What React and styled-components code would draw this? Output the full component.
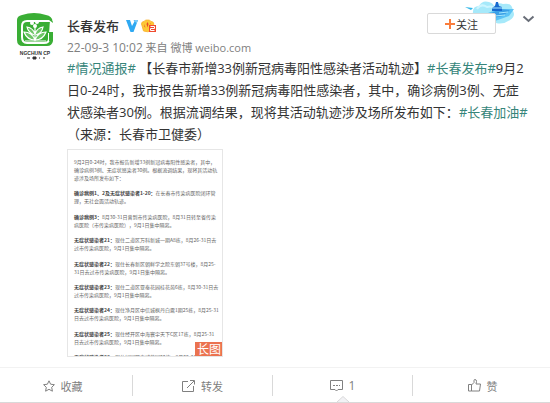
import React from 'react';

//styles
import styled, { createGlobalStyle } from 'styled-components'

const GlobalStyle = createGlobalStyle`
  * {
    box-sizing: border-box;
  }

  body {
    margin: 0;
    background: #fff;
    color: #333;
    font-family: "Open Sans", "Noto Sans CJK SC", sans-serif;
    font-size: 13px;
    text-spacing-trim: space-all;
  }
`

let Card = styled.article`
  overflow: hidden;
  border-bottom: 1px solid #d9d9d9;
`

let Main = styled.div`
  display: grid;
  grid-template-columns: 40px 1fr;
  column-gap: 12px;
  padding: 12px 15px 10px;
`

let AvatarLink = styled.a`
  display: block;

  svg {
    display: block;
  }
`

let Header = styled.header`
  display: flex;
  justify-content: space-between;
  padding-top: 5px;
`

let NameRow = styled.div`
  display: flex;
  align-items: center;
  gap: 3px;
  height: 18px;
`

let Name = styled.a`
  margin-right: 4px;
  color: #333;
  font-weight: 500;
  line-height: 18px;
  text-decoration: none;
`

let Meta = styled.p`
  margin: 4px 0 0;
  color: #808080;
  font-size: 11px;
  line-height: 18px;

  a {
    color: inherit;
    text-decoration: none;
  }

  time {
    font-size: 12px;
  }
`

let Actions = styled.div`
  position: relative;
  display: flex;
  align-items: flex-start;
  gap: 26px;
  margin-top: -4px;
`

let Cover = styled.svg`
  position: absolute;
  top: -13px;
  left: 37px;
`

let FollowButton = styled.button`
  position: relative;
  display: flex;
  align-items: center;
  justify-content: center;
  gap: 1px;
  width: 69px;
  height: 21px;
  padding: 0;
  border: 1px solid #d9d9d9;
  border-radius: 2px;
  background: #fff;
  color: #333;
  font: inherit;
  font-size: 11px;
  cursor: pointer;
`

let MoreButton = styled.button`
  display: flex;
  align-items: center;
  height: 12px;
  padding: 0;
  border: 0;
  background: none;
  cursor: pointer;
`

let Content = styled.p`
  margin: 0;
  line-height: 22px;
`

let Topic = styled.a`
  color: #36857a;
  text-decoration: none;
`

let Picture = styled.figure`
  position: relative;
  width: 156px;
  height: 208px;
  margin: 4px 0 0;
  padding: 8px 3px 0 6px;
  overflow: hidden;
  border: 1px solid #e6e6e6;
`

let Notice = styled.div`
  display: flex;
  flex-direction: column;
  justify-content: space-between;
  height: 203px;
  color: #666;
  font-family: "Noto Sans CJK SC", sans-serif;
  font-size: 5px;
  line-height: 8px;

  p {
    margin: 0;
  }

  b {
    color: #444;
  }
`

let LongTag = styled.figcaption`
  position: absolute;
  right: -1px;
  bottom: -1px;
  width: 28px;
  background: #eb7350;
  color: #fff;
  font-size: 12px;
  line-height: 15px;
  text-align: center;
`

let Footer = styled.footer`
  display: grid;
  grid-template-columns: repeat(4, 1fr);
  margin: 0 -3px 0 -7px;
  padding: 7px 0 6px;
  border-top: 1px solid #f2f2f2;
`

let FooterButton = styled.button`
  position: relative;
  display: flex;
  align-items: center;
  justify-content: center;
  gap: 6px;
  height: 21px;
  padding: 0;
  border: 0;
  border-right: 1px solid #d9d9d9;
  background: none;
  color: #808080;
  font: inherit;
  font-size: ${props => props.$count ? '12px' : '11px'};
  cursor: pointer;
`

let Arrow = styled.svg`
  position: absolute;
  bottom: -6px;
  left: 64px;
`

const Avatar = () => (
  <svg width="40" height="50" viewBox="0 0 40 50">
    <path d="M7 3Q19-1 31 3Q37 4 38 10V29Q37 34 32 34H8Q2 34 2 28V8Q2 4 7 3Z" fill="#3aae35" />
    <path d="M38 9H12Q7 9 7 14V25Q7 31 12 31H29Q34 31 34 27V21" fill="none" stroke="#fff" strokeWidth="2" />
    <path d="M35 8H40V20L34 22Z" fill="#fff" />
    <path d="M33 5Q38 7 38 11L34 8Z" fill="#3aae35" />
    <path d="M34 20H38V29H34Z" fill="#3aae35" />
    <path d="M20 29V14M20 28Q12 28 9 20Q17 20 20 28Q23 20 31 20Q28 28 20 28M19 23Q13 20 12 15Q18 16 20 22Q22 16 28 15Q27 21 21 23" fill="#6cc564" stroke="#fff" strokeWidth="1.2" />
    <circle cx="17" cy="11" r="2" fill="#fff" />
    <circle cx="22" cy="10" r="2" fill="#fff" />
    <circle cx="20" cy="14" r="2" fill="#fff" />
    <path d="M10 29H31" stroke="#fff" strokeWidth="1" />
    <text x="20" y="43" textAnchor="middle" fontSize="5" fontWeight="700" fill="#333" fontFamily="Liberation Sans, sans-serif">NGCHUN CP</text>
    <path d="M12 46h3M18 45h3v2h-3zM24 46h1M28 46h2" fill="#333" stroke="#333" strokeWidth="1" />
  </svg>
)

const Verified = () => (
  <svg width="12" height="12" viewBox="0 0 12 12">
    <path d="M0 0H4L6 6L8.500 1.500L7.500 0H12L7.500 12H4.500Z" fill="#2fa9f2" />
    <path d="M8 0H12L10.500 3.500Z" fill="#7dccfa" />
  </svg>
)

const Crown = () => (
  <svg width="16" height="14" viewBox="0 0 16 14">
    <path d="M.5 5Q.5 2.500 3 2.500Q4 .5 6.500 1Q9 .5 10 2.500Q12.800 2.500 12.800 5L11 12Q6.500 13.500 2.500 12Z" fill="#fdc836" stroke="#f9ae2b" strokeWidth=".8" />
    <path d="M6.500 3L7.500 5L6.500 8.500L5.500 5ZM3 5L4.500 8.500L3.500 8ZM10 4L9 6L9.500 4Z" fill="#e94b25" />
    <rect x="8" y="6" width="7" height="7" fill="#ef4a2f" />
    <path d="M9.500 7.500H13.500V9.500H9.500V11.500H13.500" fill="none" stroke="#fff" strokeWidth="1" />
  </svg>
)

const CoverArt = () => (
  <Cover width="54" height="26" viewBox="0 0 54 26">
    <path d="M1 7L9 8L7 10Z" fill="#35b8e8" />
    <path d="M9 14Q8 6 15 6Q18 0 25 2Q29 3 30 6Q34 2 39 4Q48 2 49 11Q52 16 46 20Q39 25 32 23H8Z" fill="#a6e9fa" />
    <path d="M13 9Q17 3 23 7Q29 5 31 10" fill="none" stroke="#cdf5ff" strokeWidth="2" />
    <path d="M19 15L34 9L50 9L45 16L31 21Z" fill="#5cc3f5" />
    <path d="M25 14L36 9L46 10L39 16L29 18Z" fill="#3a9fe6" />
    <path d="M32 2H34L35 6L38 7V11H28V8L31 6Z" fill="#1769cf" />
    <path d="M28 8H38M35 13L44 12M31 16L41 15" stroke="#a6e9ff" strokeWidth="1" />
  </Cover>
)

const StarIcon = () => (
  <svg width="12" height="12" viewBox="0 0 12 12" fill="none" stroke="#808080">
    <path d="M6 .8L7.600 4.200L11.400 4.700L8.700 7.300L9.400 11.200L6 9.300L2.600 11.200L3.300 7.300L.6 4.700L4.400 4.200Z" />
  </svg>
)

const ShareIcon = () => (
  <svg width="13" height="12" viewBox="0 0 13 12" fill="none" stroke="#808080">
    <path d="M6 1.500H.5V11.500H11.500V6M8 .5H12.500V4.500M12 1L5 8" />
  </svg>
)

const CommentIcon = () => (
  <svg width="13" height="12" viewBox="0 0 13 12" fill="none" stroke="#808080">
    <path d="M.5 .5H12.500V9.500H8L6.500 11L5 9.500H.5Z" />
    <path d="M3 5.500H10" strokeDasharray="2 1" />
  </svg>
)

const LikeIcon = () => (
  <svg width="13" height="13" viewBox="0 0 13 13" fill="none" stroke="#808080">
    <path d="M.5 5.500H3.500V12H.5ZM3.500 6L6 3.500V1.500Q6 .5 7 .5Q8.500 .5 8.500 2.500L8 5H12.500L11.500 12H3.500" />
  </svg>
)

//paragraphs of the long notice picture
const notice = [
  { text: '9月2日0-24时\uff0c我市报告新增33例新冠病毒阳性感染者\uff0c其中\uff0c确诊病例3例、无症状感染者30例。根据流调结果\uff0c现将其活动轨迹涉及场所发布如下\uff1a' },
  { title: '确诊病例1、2及无症状感染者1-20\uff1a', text: '在长春市传染病医院闭环管理\uff0c无社会面活动轨迹。' },
  { title: '确诊病例3\uff1a', text: '8月30-31日曾到市传染病医院\uff0c8月31日转至省传染病医院\uff08市传染病医院\uff09\uff0c9月1日集中隔离。' },
  { title: '无症状感染者21\uff1a', text: '现住二道区万科新城一期A8栋\uff0c8月26-31日去过市传染病医院\uff0c9月1日集中隔离。' },
  { title: '无症状感染者22\uff1a', text: '现住长春新区朝鲜学之院东朝37号楼\uff0c8月25-31日去过市传染病医院\uff0c9月1日集中隔离。' },
  { title: '无症状感染者23\uff1a', text: '现住二道区亚泰花园桂花苑6栋\uff0c8月30-31日去过市传染病医院\uff0c9月1日集中隔离。' },
  { title: '无症状感染者24\uff1a', text: '现住净月区中信城枫丹白露1期25栋\uff0c8月25-31日去过市传染病医院\uff0c9月1日集中隔离。' },
  { title: '无症状感染者25\uff1a', text: '现住经开区中海寰宇天下C区17栋\uff0c8月25-31日去过市传染病医院\uff0c9月1日集中隔离。' },
  { title: '无症状感染者26\uff1a', text: '现住绿园区春城花园22栋\uff0c8月25-31日' },
]

const Post = () => {
  return (
    <Card>
      <Main>
        <AvatarLink href="#" aria-label="长春发布">
          <Avatar />
        </AvatarLink>
        <div>
          <Header>
            <div>
              <NameRow>
                <Name href="#">长春发布</Name>
                <Verified />
                <Crown />
              </NameRow>
              <Meta>
                <a href="#"><time>22-09-3 10:02</time></a> 来自 <a href="#">微博 weibo.com</a>
              </Meta>
            </div>
            <Actions>
              <CoverArt />
              <FollowButton>
                <svg width="10" height="10" viewBox="0 0 10 10">
                  <path d="M5 0V10M0 5H10" stroke="#fa7d3c" strokeWidth="2" />
                </svg>
                关注
              </FollowButton>
              <MoreButton aria-label="更多">
                <svg width="13" height="8" viewBox="0 0 13 8">
                  <path d="M1.500 1.500L6.500 6L11.500 1.500" fill="none" stroke="#696e78" strokeWidth="2" />
                </svg>
              </MoreButton>
            </Actions>
          </Header>
          <Content>
            <Topic href="#">#情况通报#</Topic> 【长春市新增33例新冠病毒阳性感染者活动轨迹】<Topic href="#">#长春发布#</Topic>9月2<br />
            日0-24时&#xff0c;我市报告新增33例新冠病毒阳性感染者&#xff0c;其中&#xff0c;确诊病例3例、无症<br />
            状感染者30例。根据流调结果&#xff0c;现将其活动轨迹涉及场所发布如下&#xff1a;<Topic href="#">#长春加油#</Topic><br />
            &#xff08;来源&#xff1a;长春市卫健委&#xff09;
          </Content>
          <Picture>
            <Notice>
              {notice.map(item => (
                <p key={item.text}>
                  {item.title && <b>{item.title}</b>}
                  {item.text}
                </p>
              ))}
            </Notice>
            <LongTag>长图</LongTag>
          </Picture>
        </div>
      </Main>
      <Footer>
        <FooterButton><StarIcon />收藏</FooterButton>
        <FooterButton><ShareIcon />转发</FooterButton>
        <FooterButton $count>
          <CommentIcon />1
          <Arrow width="12" height="6" viewBox="0 0 12 6">
            <path d="M0 6L6 .5L12 6" fill="#f2f2f5" stroke="#d9d9d9" />
          </Arrow>
        </FooterButton>
        <FooterButton><LikeIcon />赞</FooterButton>
      </Footer>
    </Card>
  );
};

const App = () => (
  <>
    <GlobalStyle />
    <Post />
  </>
)

export default App;
